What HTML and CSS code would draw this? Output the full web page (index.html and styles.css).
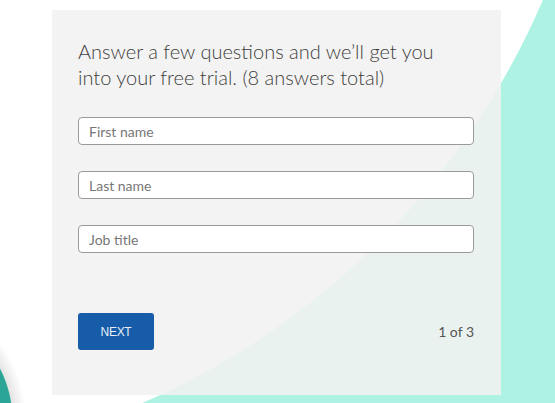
FILE: index.html
```html
<!DOCTYPE html>
<html lang="en">
<head>
  <meta charset="UTF-8" />
  <meta name="viewport" content="width=device-width, initial-scale=1.0" />
  <title>Free Trial Signup</title>
  <link rel="stylesheet" href="styles.css">
</head>
<body>

  <div class="form-card">
    <h2>Answer a few questions and we’ll get you into your free trial. (8 answers total)</h2>

    <div class="fields">
      <input type="text" placeholder="First name" />
      <input type="text" placeholder="Last name" />
      <input type="text" placeholder="Job title" />
    </div>

    <div class="form-footer">
      <button class="next">NEXT</button>
      <span class="step">1 of 3</span>
    </div>
  </div>

</body>
</html>
```
FILE: styles.css
```css
html {
  height: 100%;
}

/* teal blob bottom-left, then a huge white circle over the mint backdrop */
body {
  margin: 0;
  min-height: 100%;
  overflow: hidden;
  font-family: Lato, 'Open Sans', sans-serif;
  background:
    radial-gradient(circle 113px at -100px 420px, #2aa596 99%, rgba(0, 0, 0, 0.1) 100%, rgba(0, 0, 0, 0) 112%),
    radial-gradient(circle 773px at -167px -305px, #fff 99.9%, #adf2e2 100%);
  background-color: #adf2e2;
}

.form-card {
  margin: 10px 0 0 52px;
  width: 449px;
  height: 385px;
  box-sizing: border-box;
  padding: 28px 27px 0 26px;
  background: rgba(241, 241, 241, 0.89);
}

.form-card h2 {
  margin: 0;
  max-width: 370px;
  font-size: 20px;
  font-weight: 300;
  line-height: 26px;
  color: #3e3e3c;
}

.fields {
  display: flex;
  flex-direction: column;
  gap: 26px;
  margin-top: 27px;
}

.fields input {
  height: 28px;
  box-sizing: border-box;
  padding: 0 10px;
  border: 1px solid #9a9a9a;
  border-radius: 4px;
  background: #fff;
  font-family: Lato, 'Open Sans', sans-serif;
  font-size: 14px;
  color: #333;
}

.fields input::placeholder {
  color: #777;
}

.form-footer {
  display: flex;
  justify-content: space-between;
  align-items: center;
  margin-top: 60px;
}

button.next {
  width: 76px;
  height: 37px;
  border: none;
  border-radius: 3px;
  background: #165ca9;
  color: #e8eef7;
  font-family: 'Liberation Sans', Arial, sans-serif;
  font-size: 12px;
  letter-spacing: -0.3px;
  cursor: pointer;
}

.step {
  font-size: 14px;
  color: #555;
}
```
